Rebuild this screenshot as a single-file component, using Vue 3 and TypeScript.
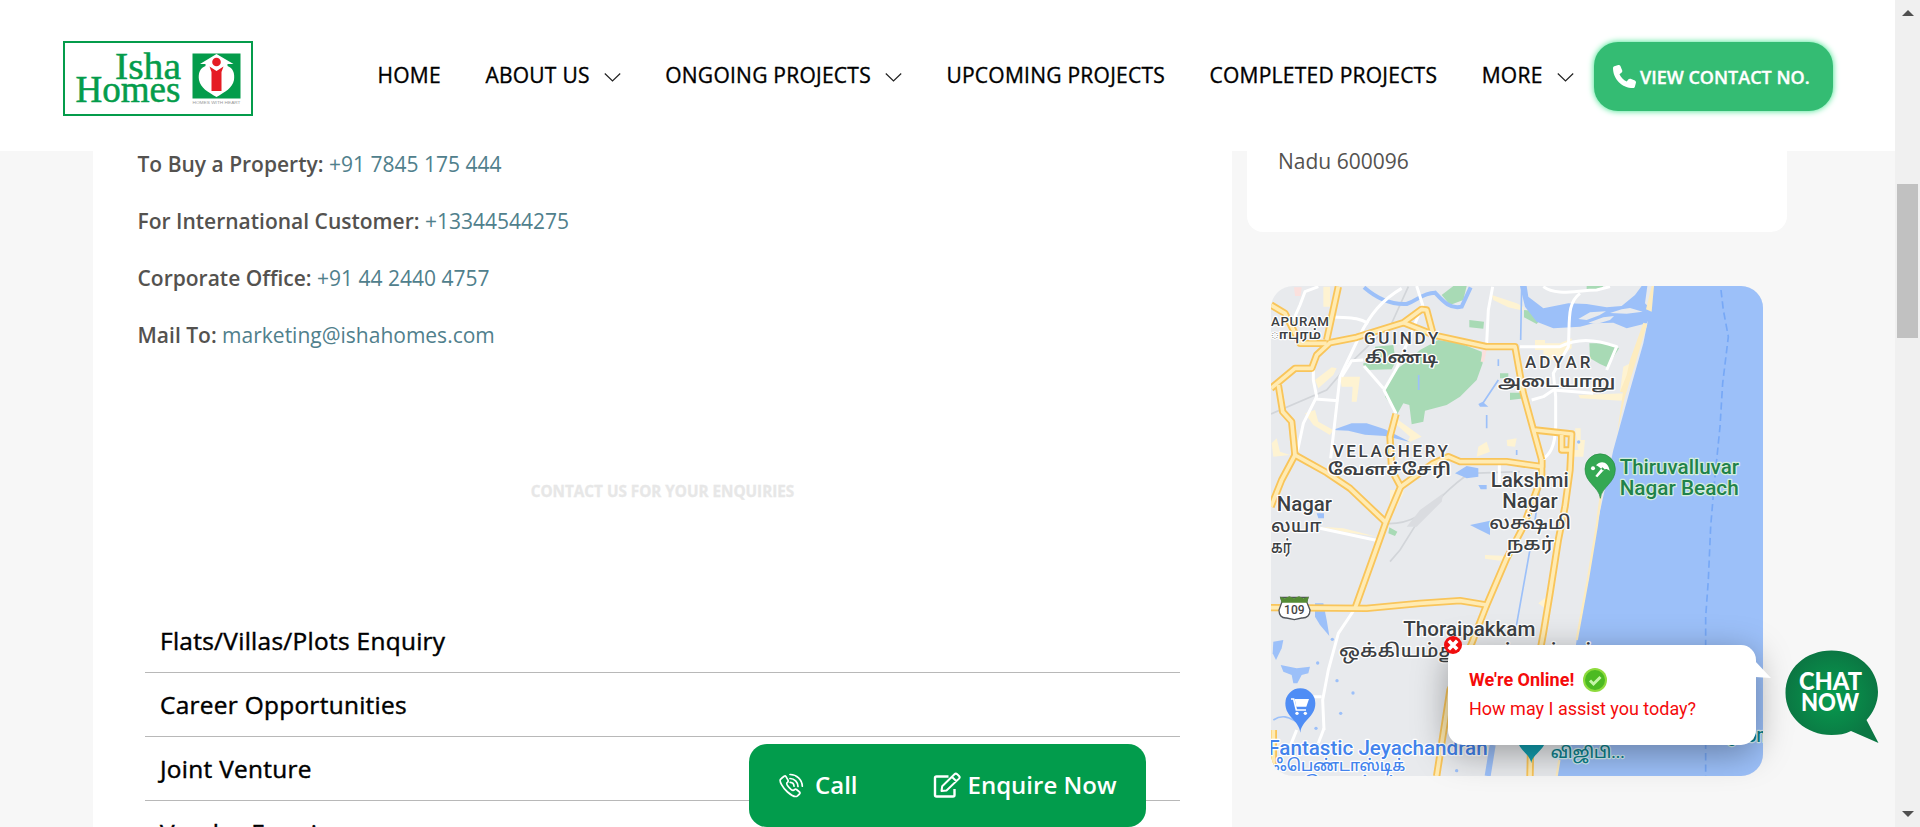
<script setup lang="ts">
interface NavItem { label: string; menu: boolean }
const nav: NavItem[] = [
  { label: 'HOME', menu: false },
  { label: 'ABOUT US', menu: true },
  { label: 'ONGOING PROJECTS', menu: true },
  { label: 'UPCOMING PROJECTS', menu: false },
  { label: 'COMPLETED PROJECTS', menu: false },
  { label: 'MORE', menu: true },
]
const contacts: { label: string; value: string }[] = [
  { label: 'To Buy a Property:', value: '+91 7845 175 444' },
  { label: 'For International Customer:', value: '+13344544275' },
  { label: 'Corporate Office:', value: '+91 44 2440 4757' },
  { label: 'Mail To:', value: 'marketing@ishahomes.com' },
]
const enquiries: string[] = ['Flats/Villas/Plots Enquiry', 'Career Opportunities', 'Joint Venture', 'Vendor Enquiry']

const water: string[] = [
  'M1180 18L1170 90L1150 190L1110 330L1060 510L1010 740L985 900L950 1080L890 1488H1509V18Z',
  'M780 18H800L805 50L850 85L925 70L980 72L1040 82L1085 78L1125 45L1145 18H1162L1155 70L1180 95L1160 130L1100 145L1060 128L1000 130L960 140L880 145L830 125L795 80Z',
  'M218 450L275 430L320 430L375 448L450 486L375 468L315 464L265 452Z',
  'M585 580L620 558L655 565L655 590L620 595L605 588Z',
  'M630 735L690 722L690 765L655 748Z',
  'M655 615H680V628H662Z M655 372L668 365L685 380H660Z M170 700H192V715H175Z',
  'M165 970L190 970L200 1020L208 1068L180 1035L165 1010Z',
  'M40 1085L70 1080L65 1105L48 1140L38 1120Z',
  'M62 1155L110 1165L150 1160L145 1180L125 1185L112 1210L100 1210L95 1185L70 1175Z',
]
const green: string[] = [
  'M535 180L600 190L665 215L668 250L650 300L600 350L560 375L495 392L490 425L455 433L448 375L430 370L412 402L375 350L374 320L400 275L440 245L480 210Z',
  'M545 45L580 18H620L610 60L570 75Z',
  'M628 120L672 125L670 146L628 142Z',
  'M310 250L410 240L395 268L320 270L310 255Z M345 200L400 195L405 230L350 240Z',
  'M988 190L1050 190L1077 205L1042 262L1020 252L990 235Z',
  'M792 90L820 92L840 120L830 132L792 112Z M750 338H788L795 355L750 360Z M720 280H745V295H720Z',
  'M388 742L412 755L405 768L385 760Z M980 18H1030L1020 30H980Z',
]
const sand: string[] = [
  'M190 20H210V80H190Z M165 300L215 262L230 265L220 285L175 325Z M240 290H300L290 365H275L278 320H245Z',
  'M135 400L165 390L175 425L220 450L210 465L160 435Z M415 420L485 470L440 490L450 470L405 430Z',
  'M695 45L770 70L790 80V92L745 82L700 60Z M655 500L680 485L690 515L650 530Z M740 480L770 475L765 500L742 498Z',
  'M825 180H855V190H900L935 175V205L885 240H850V210H825Z M1090 260L1120 245L1100 335H1080Z M955 345L1095 340L1085 362L960 355Z',
  'M945 445H962V480H975L970 530H940V510H955Z M675 825L740 828L720 842L675 836Z M835 970L860 950L855 985Z',
  'M185 740L250 745L350 770L250 755Z M390 630H430V640L410 680H390Z M35 490L50 475L60 515L90 525L40 530Z',
]
const minor: string[] = [
  'M175 20L135 35L120 75L100 120', 'M425 25C365 60 330 105 300 165L240 290L212 535', 'M470 18L488 75L410 265L372 330L408 400',
  'M215 110C270 115 290 110 325 130', 'M160 270V300L170 350L130 430L112 515', 'M165 357L235 362', 'M310 240L275 242L245 290', 'M312 258L370 325',
  'M698 20L685 90L680 190', 'M960 40C920 70 930 120 925 200L880 280L887 350L887 440C885 500 870 525 845 540',
  'M780 200H900C950 175 1000 175 1070 200L1040 270', 'M815 360L850 350L880 330L1000 340', 'M850 20C890 50 950 30 1010 30L1050 20',
  'M718 545V610', 'M180 745L355 782', 'M282 990L235 1060L205 1170L188 1260L192 1350', 'M160 1250H185', 'M192 1345L175 1390', 'M110 1350L90 1400',
]
const roads: string[] = [
  'M33 75L75 100L100 150L120 190H200', 'M235 20L200 180', 'M33 325L105 265H155L170 225L210 188L290 172L430 128L485 88L500 90L520 165L680 200H765L790 340L845 540',
  'M430 128L530 168', 'M55 315L68 395L95 425L105 525', 'M33 680L65 600L105 525L200 578L270 625L375 725', 'M408 402L390 470L395 570L422 620L378 725L285 985',
  'M422 620L520 550L565 530L600 545L740 545L845 560L845 540', 'M825 450L935 462L930 570L915 680L895 780L870 940L850 1060L815 1250L810 1488',
  'M905 465V510H930', 'M33 983L320 985L480 970L600 962L680 975L740 835L790 740L845 590L845 540', 'M680 975L635 1090L570 1230L530 1488', 'M40 1350V1460',
]
const ponds: number[][] = [[217, 1078], [173, 1149], [231, 1202], [279, 1239], [242, 1300], [168, 1345], [590, 1472], [956, 486]]
interface Label { x: number; y: number; text: string; size: number; kind?: string; width: number }
const labels: Label[] = [
  { x: 33, y: 139, text: 'APURAM', size: 40, kind: 'area', width: 174 },
  { x: 33, y: 178, text: 'ாபுரம்', size: 40, kind: 'tamil', width: 150 },
  { x: 312, y: 193, text: 'GUINDY', size: 51, kind: 'area', width: 223 },
  { x: 314, y: 248, text: 'கிண்டி', size: 49, kind: 'tamil', width: 220 },
  { x: 795, y: 265, text: 'ADYAR', size: 51, kind: 'area', width: 196 },
  { x: 714, y: 322, text: 'அடையாறு', size: 49, kind: 'tamil', width: 352 },
  { x: 218, y: 531, text: 'VELACHERY', size: 51, kind: 'area', width: 346 },
  { x: 203, y: 585, text: 'வேளச்சேரி', size: 49, kind: 'tamil', width: 370 },
  { x: 50, y: 692, text: 'Nagar', size: 60, width: 166 },
  { x: 33, y: 755, text: 'லயா', size: 55, width: 152 },
  { x: 33, y: 820, text: 'கர்', size: 55, width: 62 },
  { x: 692, y: 621, text: 'Lakshmi', size: 60, width: 234 },
  { x: 727, y: 685, text: 'Nagar', size: 60, width: 166 },
  { x: 688, y: 746, text: 'லக்ஷ்மி', size: 55, width: 245 },
  { x: 740, y: 810, text: 'நகர்', size: 55, width: 142 },
  { x: 430, y: 1067, text: 'Thoraipakkam', size: 60, width: 396 },
  { x: 237, y: 1130, text: 'ஒக்கியம்துரைப்பாக்கம்', size: 55, width: 775 },
  { x: 1079, y: 582, text: 'Thiruvalluvar', size: 60, kind: 'park', width: 358 },
  { x: 1079, y: 644, text: 'Nagar Beach', size: 60, kind: 'park', width: 357 },
  { x: 25, y: 1424, text: 'Fantastic Jeyachandran', size: 60, kind: 'shop', width: 658 },
  { x: 38, y: 1472, text: 'ஃபெண்டாஸ்டிக்', size: 48, kind: 'shop', width: 398 },
  { x: 130, y: 1524, text: 'ஜெயச்சந்', size: 48, kind: 'shop', width: 285 },
  { x: 872, y: 1435, text: 'விஜிபி...', size: 48, kind: 'sea', width: 222 },
  { x: 1035, y: 1387, text: 'VGP Marine Kingdom', size: 58, kind: 'sea', width: 500 },
]
</script>

<template>
  <div class="page">
    <header class="header">
      <a class="logo">
        <svg viewBox="0 0 190 75" width="190" height="75">
          <rect x="1" y="1" width="188" height="73" fill="#fff" stroke="#049c4b" stroke-width="2" />
          <g class="brand">
            <text x="52" y="38.300" textLength="66" lengthAdjust="spacingAndGlyphs">Isha</text>
            <text x="12.500" y="61.300" textLength="105" lengthAdjust="spacingAndGlyphs">Homes</text>
          </g>
          <rect x="129.500" y="12.500" width="48" height="45" fill="#049c4b" />
          <path d="M153.500 13L170.500 23H164.500V25C170 27 172 32 171 39C169.500 47 162 51 153.500 56C145 51 137.500 47 136 39C135 32 137 27 142.500 25V23H137Z" fill="#fff" />
          <path d="M146.500 25.500L153.500 30L160.500 25.500L158.500 31V50H148.500V31Z" fill="#e51c24" />
          <circle cx="153.500" cy="21" r="4.300" fill="#e51c24" />
          <text x="129.500" y="62.500" class="motto" textLength="48" lengthAdjust="spacingAndGlyphs">HOMES WITH HEART</text>
        </svg>
      </a>
      <nav class="nav">
        <a v-for="item in nav" :key="item.label" class="nav-item">{{ item.label }}<svg v-if="item.menu" class="chevron" viewBox="0 0 17 10" width="17" height="10"><path d="M.8 .5L8.500 8L16.200 .5" fill="none" stroke="#222" stroke-width="1.200" /></svg></a>
      </nav>
      <a class="view-contact">
        <svg viewBox="0 0 512 512" width="23" height="23"><path fill="#fff" d="M164.900 24.600c-7.700-18.600-28-28.500-47.400-23.200l-88 24C12.100 30.200 0 46 0 64c0 247.400 200.600 448 448 448 18 0 33.800-12.100 38.600-29.500l24-88c5.300-19.400-4.600-39.700-23.200-47.400l-96-40c-16.300-6.800-35.200-2.100-46.300 11.600L304.700 368C234.300 334.700 177.300 277.700 144 207.300l49.300-40.300c13.700-11.200 18.400-30 11.600-46.300l-40-96z" /></svg>
        <span>VIEW CONTACT NO.</span>
      </a>
    </header>

    <div class="body">
      <main class="content">
        <p v-for="c in contacts" :key="c.label" class="contact"><strong>{{ c.label }}</strong> <a>{{ c.value }}</a></p>
        <h4 class="caption">CONTACT US FOR YOUR ENQUIRIES</h4>
        <ul class="enquiries"><li v-for="e in enquiries" :key="e">{{ e }}</li></ul>
      </main>
      <aside class="side">
        <div class="address">Nadu 600096</div>
        <div class="map">
          <svg viewBox="33 18 1476 1470" width="492" height="490">
            <rect x="33" y="18" width="1476" height="1470" fill="#e8eaed" />
            <g fill="#fef3d2"><path v-for="(d, i) in sand" :key="i" :d="d" /></g>
            <path d="M445 20L395 130L260 260L200 330L33 402M370 730C500 740 530 640 630 580L780 575M390 845L420 810L470 730" fill="none" stroke="#d2d5d9" stroke-width="5" />
            <path d="M440 740L480 690L550 640L545 665L470 740Z" fill="#dadce0" />
            <g fill="#a8dab5"><path v-for="(d, i) in green" :key="i" :d="d" /></g>
            <g fill="#9cc0f9"><path v-for="(d, i) in water" :key="i" :d="d" /></g>
            <path d="M312 22C350 55 390 75 440 72C475 60 485 40 525 38C550 65 570 88 605 80L632 22" fill="none" stroke="#9cc0f9" stroke-width="12" />
            <g fill="none" stroke="#9cc0f9" stroke-width="5"><path d="M785 18L782 180M665 375L715 300M476 285V330M715 238V258M680 405V445M770 510V525M815 780L765 1060M845 590L825 720" /><path d="M698 1395L683 1488" stroke-width="18" /><path d="M40 1320C70 1300 90 1315 110 1325" /></g>
            <path d="M955 117L990 97L1038 94L1018 106L980 120Z M985 128L1030 112L1062 108L1050 120L1010 132Z M1050 99L1085 88L1110 84L1148 95L1100 101Z" fill="#e8eaed" />
            <path d="M1150 128L1162 132L1120 270L1095 350L1070 470L1090 330L1110 240Z M1175 18H1182L1175 95L1158 88Z M1110 260L1115 250L1098 340L1080 335Z" fill="#fdecc0" />
            <path d="M1022 650L1010 740L985 890L950 1080M898 1440L890 1488" fill="none" stroke="#fdecc0" stroke-width="7" />
            <path d="M102 22H125L122 48H105Z M668 210H680L672 245H662Z" fill="#fbe0dd" />
            <g class="minor"><path v-for="(d, i) in minor" :key="i" :d="d" /></g>
            <g class="road-edge"><path v-for="(d, i) in roads" :key="i" :d="d" /></g>
            <g class="road"><path v-for="(d, i) in roads" :key="i" :d="d" /></g>
            <path d="M1383 30L1390 90L1405 170L1388 310L1380 440L1362 620L1352 740L1345 900L1337 1010V1488" fill="none" stroke="#77a8f6" stroke-width="5" stroke-dasharray="22 12" />
            <g fill="#9cc0f9"><circle v-for="p in ponds" :key="p.join()" :cx="p[0]" :cy="p[1]" r="5" /></g>
            <path d="M62 952H144L140 965L150 990C150 1005 142 1015 125 1014L103 1019L80 1014C64 1015 57 1005 57 990L66 965Z" fill="#fff" stroke="#50545a" stroke-width="4" />
            <path d="M60 950L75 955L88 949L102 955L117 949L130 955L146 950L142 968H65Z" fill="#548b35" />
            <text class="shield" x="103" y="1001" text-anchor="middle">109</text>
            <text v-for="l in labels" :key="l.text + l.y" :x="l.x" :y="l.y" :font-size="l.size" :class="['label', l.kind]" :textLength="l.width" :lengthAdjust="l.kind === 'area' ? 'spacing' : 'spacingAndGlyphs'">{{ l.text }}</text>
            <path d="M1021 655C1017 620 975 610 975 567A45 45 0 0 1 1066 567C1066 610 1025 620 1021 655Z" fill="#34a853" stroke="#2a8c45" stroke-width="2" />
            <path d="M1008 556C1022 539 1046 545 1049 573C1040 565 1033 565 1031 574C1022 563 1014 559 1008 556Z M1027 562L1006 588L1012 592L1034 568Z" fill="#fff" /><circle cx="999" cy="565" r="6" fill="#fff" />
            <path d="M121 1358C117 1320 76 1313 76 1270A45 45 0 0 1 166 1270C166 1313 125 1320 121 1358Z" fill="#4f8df5" />
            <path d="M93 1257H101L109 1290H138" fill="none" stroke="#fff" stroke-width="5" /><path d="M104 1257H147L139 1280H109Z" fill="#fff" /><circle cx="111" cy="1300" r="5" fill="#fff" /><circle cx="136" cy="1300" r="5" fill="#fff" />
            <path d="M814 1450C810 1420 770 1410 770 1365A45 45 0 0 1 860 1365C860 1410 818 1420 814 1450Z" fill="#129eaf" />
          </svg>
        </div>
      </aside>
    </div>

    <div class="actions">
      <a class="call">
        <svg viewBox="0 0 26 26" width="26" height="26" fill="none" stroke="#fff" stroke-width="1.700" stroke-linecap="round" stroke-linejoin="round"><path d="M4.500 5.500L6.200 4.200C7 3.700 7.600 4 8 4.600L10 8.200C10.500 9.200 10 10 9 10.800C8.200 11.800 10 14.500 13 17.300C14.600 18.700 15.600 18.500 16.500 17.600C17.200 17 17.800 17 18.500 17.500L21.500 20C22.200 20.600 22.200 21.300 21.500 22L19.500 23.800C17.800 25.200 14 24 9.500 20C4.500 15.500 1 9 2.500 7.300Z" /><path d="M12.200 10.300A4 4 0 0 1 16 14.200M12 6.500A8 8 0 0 1 20 14.500M12 2.500A12 12 0 0 1 24.300 14.200" /></svg>
        <span>Call</span>
      </a>
      <a class="enquire">
        <svg viewBox="0 0 28 26" width="28" height="26" fill="none" stroke="#fff" stroke-width="2.400" stroke-linejoin="round"><path d="M15.500 4.500H3.500C2.500 4.500 2 5 2 6V23C2 24 2.500 24.500 3.500 24.500H20C21 24.500 21.500 24 21.500 23V17" /><path d="M8.500 19L9.200 14.200L21.500 2.300C22.300 1.500 23.300 1.500 24.200 2.300L26 4C26.800 4.800 26.800 5.800 26 6.600L13.500 18.500Z M19 5L23.500 9.300" stroke-width="2" /></svg>
        <span>Enquire Now</span>
      </a>
    </div>

    <div class="chat-popup">
      <svg class="close" viewBox="0 0 18 18" width="18" height="18"><circle cx="9" cy="9" r="9" fill="#f00d0d" /><path d="M4.800 4.800L13.200 13.200M13.200 4.800L4.800 13.200" stroke="#fff" stroke-width="3.600" /></svg>
      <div class="online"><b>We're Online!</b><svg viewBox="0 0 24 24" width="24" height="24"><circle cx="12" cy="12" r="12" fill="#8edb3d" /><circle cx="12" cy="12" r="10" fill="#4cba22" /><path d="M7 12.500L10.500 16L17.500 9" fill="none" stroke="#c5f5a8" stroke-width="3" /></svg></div>
      <div>How may I assist you today?</div>
      <svg class="tail" viewBox="0 0 17 18" width="17" height="18"><path d="M0 0L16 17L0 16Z" fill="#fff" /></svg>
    </div>
    <svg class="chat-now" viewBox="0 0 94 94" width="94" height="94">
      <defs><radialGradient id="bubble"><stop offset="0" stop-color="#079c4f" /><stop offset="1" stop-color="#0b7743" /></radialGradient></defs>
      <path d="M46.500 .5C72 .5 93 18 93 42C93 53 88 63 81.500 70L93.500 93L66 81C60 84 54 85 46.500 85C21 85 .5 67 .5 43C.5 18 21 .5 46.500 .5Z" fill="url(#bubble)" />
      <text x="14" y="39.800" textLength="63" lengthAdjust="spacingAndGlyphs">CHAT</text><text x="16" y="61" textLength="58" lengthAdjust="spacingAndGlyphs">NOW</text>
    </svg>

    <div class="scrollbar">
      <svg viewBox="0 0 12 6" width="12" height="6"><path d="M0 6L6 0L12 6Z" fill="#505050" /></svg>
      <div class="thumb"></div>
      <svg class="down" viewBox="0 0 12 6" width="12" height="6"><path d="M0 0L6 6L12 0Z" fill="#505050" /></svg>
    </div>
  </div>
</template>

<style>
body { margin: 0; overflow: hidden; }
</style>

<style scoped>
* { box-sizing: border-box; }
.page { position: relative; width: 1920px; height: 827px; overflow: hidden; background: #f7f7f7; font-family: 'Open Sans', sans-serif; }
.header { display: flex; width: 1895px; height: 151px; background: #fff; padding: 0 62px 0 63px; }
.logo { margin-top: 41px; width: 190px; height: 75px; }
.brand { font-family: 'Liberation Serif', serif; font-size: 38px; fill: #049c4b; stroke: #049c4b; stroke-width: .5px; }
.motto { font: 4px 'Liberation Sans', sans-serif; fill: #999; }
.nav { display: flex; gap: 44.500px; margin-left: 124.500px; padding-top: 60px; }
.nav-item { display: block; font-size: 21px; line-height: 30px; letter-spacing: .25px; color: #000; -webkit-text-stroke: .35px #000; white-space: nowrap; }
.chevron { margin-left: 14px; vertical-align: 0; }
.view-contact { display: flex; align-items: center; flex: none; margin: 42px 0 0 auto; width: 239px; height: 69px; padding-left: 19px; gap: 4px; border-radius: 24px; background: #34bc73; box-shadow: 0 0 6px #34e287; color: #fff; font-size: 18px; font-weight: 600; -webkit-text-stroke: .35px #fff; white-space: nowrap; }
.body { display: flex; height: 676px; overflow: hidden; }
.content { width: 1139px; margin-left: 93px; background: #fff; flex: none; overflow: hidden; }
.contact { margin: 0 0 27px 44.500px; font-size: 21px; line-height: 30px; color: #54524f; }
.contact:first-child { margin-top: -2px; }
.contact strong { font-weight: 600; }
.contact a { color: #50808c; }
.caption { margin: 130px 0 0; text-align: center; font-size: 15.250px; line-height: 22px; font-weight: 700; color: #e7e7e7; -webkit-text-stroke: .3px #e7e7e7; }
.enquiries { list-style: none; margin: 107px 52px 0; padding: 0; }
.enquiries li { height: 64px; padding: 15px 15px 0; border-bottom: 1px solid #b8b8b8; font-size: 24.400px; line-height: 34px; letter-spacing: .3px; color: #000; -webkit-text-stroke: .45px #000; }
.side { width: 540px; margin-left: 15px; }
.address { height: 81px; padding: 0 31px; border-radius: 0 0 16px 16px; background: #fff; font-size: 21px; line-height: 20px; color: #54524f; }
.map { width: 492px; height: 490px; margin: 54px 0 0 24px; border-radius: 22px; overflow: hidden; }
.map svg { display: block; }
.minor { fill: none; stroke: #fff; stroke-width: 9px; stroke-linejoin: round; }
.road-edge { fill: none; stroke: #f9c55a; stroke-width: 22px; stroke-linejoin: round; }
.road { fill: none; stroke: #ffebb3; stroke-width: 11px; stroke-linejoin: round; }
.label { font-family: Roboto, 'Noto Sans Tamil', sans-serif; font-weight: 500; fill: #3c4043; stroke: #fff; stroke-width: 7px; stroke-linejoin: round; paint-order: stroke; }
.tamil { font-weight: 600; }
.park { fill: #21824a; stroke: #d5eedd; }
.shop { fill: #4383ec; }
.sea { fill: #0b7f8c; stroke: #d7f0f4; }
.shield { font: 500 36px Roboto, sans-serif; fill: #444; }
.actions { position: absolute; left: 749px; top: 744px; width: 397px; height: 83px; padding-bottom: 2px; border-radius: 18px; background: #029c4c; display: flex; align-items: center; color: #fff; font-size: 24px; font-weight: 600; }
.call, .enquire { display: flex; align-items: center; white-space: nowrap; }
.call { margin-left: 29px; gap: 11px; }
.enquire { margin-left: 75px; gap: 7px; }
.chat-popup { position: absolute; left: 1448px; top: 645px; width: 308px; height: 100px; padding: 20px 21px; border-radius: 15px; background: #fff; box-shadow: 0 8px 35px rgba(0, 0, 0, .35); font-family: Roboto, sans-serif; font-size: 18px; line-height: 29px; color: #f40b0b; white-space: nowrap; }
.online { display: flex; align-items: center; gap: 9px; }
.close { position: absolute; left: -4px; top: -9px; }
.tail { position: absolute; left: 307px; top: 16px; }
.chat-now { position: absolute; left: 1785px; top: 650px; }
.chat-now text { font: 900 24px Lato, sans-serif; fill: #fff; }
.scrollbar { position: absolute; right: 0; top: 0; width: 25px; height: 827px; background: #f0f0f0; display: flex; flex-direction: column; align-items: center; padding: 10px 0; }
.thumb { width: 21px; height: 154px; margin-top: 168px; background: #c1c1c1; }
.down { margin-top: auto; }
</style>
